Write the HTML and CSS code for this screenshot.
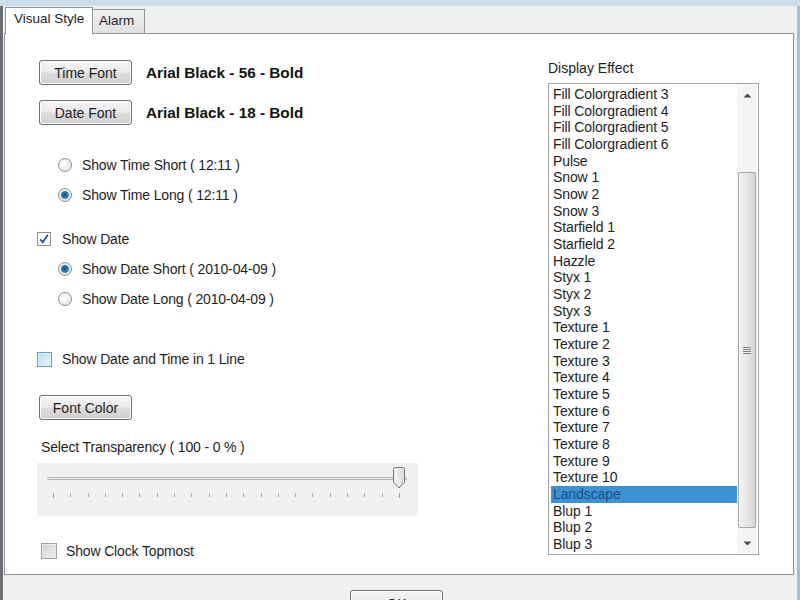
FILE: index.html
```html
<!DOCTYPE html>
<html>
<head>
<meta charset="utf-8">
<link rel="stylesheet" href="styles.css">
</head>
<body>
<div class="window">
  <div class="chrome"></div>
  <div class="tabs">
    <div class="tab active">Visual Style</div>
    <div class="tab">Alarm</div>
  </div>
  <div class="panel">
    <div class="left">
      <div class="fontrow r1">
        <button class="btn">Time Font</button>
        <span class="fontlabel">Arial Black - 56 - Bold</span>
      </div>
      <div class="fontrow r2">
        <button class="btn">Date Font</button>
        <span class="fontlabel">Arial Black - 18 - Bold</span>
      </div>
      <div class="opt radio-row g30"><span class="radio"></span>Show Time Short ( 12:11 )</div>
      <div class="opt radio-row g10"><span class="radio on"></span>Show Time Long ( 12:11 )</div>
      <div class="opt check-row g24"><span class="check on"><svg width="12" height="12" viewBox="0 0 12 12"><path d="M2.2 6.3 L4.8 9.2 L9.8 1.8" fill="none" stroke="#2c4f9e" stroke-width="1.8"/></svg></span>Show Date</div>
      <div class="opt radio-row g10"><span class="radio on"></span>Show Date Short ( 2010-04-09 )</div>
      <div class="opt radio-row g10"><span class="radio"></span>Show Date Long ( 2010-04-09 )</div>
      <div class="opt check-row g40"><span class="check hover"></span>Show Date and Time in 1 Line</div>
      <button class="btn fc">Font Color</button>
      <div class="translabel">Select Transparency ( 100 - 0 % )</div>
      <div class="trackbar">
        <div class="track"></div>
        <div class="thumb"><svg width="14" height="22" viewBox="0 0 14 22"><defs><linearGradient id="tg" x1="0" x2="1"><stop offset="0" stop-color="#f7f7f7"/><stop offset="1" stop-color="#d9d9d9"/></linearGradient></defs><path d="M1.5 2.5 Q1.5 0.5 3.5 0.5 L10.5 0.5 Q12.5 0.5 12.5 2.5 L12.5 15 L7 21 L1.5 15 Z" fill="url(#tg)" stroke="#777" stroke-width="1"/></svg></div>
        <div class="ticks">
          <i></i><i></i><i></i><i></i><i></i><i></i><i></i><i></i><i></i><i></i><i></i><i></i><i></i><i></i><i></i><i></i><i></i><i></i><i></i><i></i><i></i>
        </div>
      </div>
      <div class="opt check-row topmost"><span class="check gray"></span>Show Clock Topmost</div>
    </div>
    <div class="right">
      <div class="delabel">Display Effect</div>
      <div class="listbox">
        <ul class="items">
          <li>Fill Colorgradient 3</li>
          <li>Fill Colorgradient 4</li>
          <li>Fill Colorgradient 5</li>
          <li>Fill Colorgradient 6</li>
          <li>Pulse</li>
          <li>Snow 1</li>
          <li>Snow 2</li>
          <li>Snow 3</li>
          <li>Starfield 1</li>
          <li>Starfield 2</li>
          <li>Hazzle</li>
          <li>Styx 1</li>
          <li>Styx 2</li>
          <li>Styx 3</li>
          <li>Texture 1</li>
          <li>Texture 2</li>
          <li>Texture 3</li>
          <li>Texture 4</li>
          <li>Texture 5</li>
          <li>Texture 6</li>
          <li>Texture 7</li>
          <li>Texture 8</li>
          <li>Texture 9</li>
          <li>Texture 10</li>
          <li class="sel">Landscape</li>
          <li>Blup 1</li>
          <li>Blup 2</li>
          <li>Blup 3</li>
        </ul>
        <div class="scrollbar">
          <div class="arrow up"><svg width="9" height="5" viewBox="0 0 9 5"><path d="M0.5 4.5 L4.5 0.5 L8.5 4.5 Z" fill="#4a4a4a"/></svg></div>
          <div class="strack">
            <div class="sthumb"><span class="grip"></span></div>
          </div>
          <div class="arrow down"><svg width="9" height="5" viewBox="0 0 9 5"><path d="M0.5 0.5 L4.5 4.5 L8.5 0.5 Z" fill="#4a4a4a"/></svg></div>
        </div>
      </div>
    </div>
  </div>
  <div class="footer">
    <button class="btn ok">OK</button>
  </div>
</div>
</body>
</html>
```

FILE: styles.css
```css
* { box-sizing: border-box; }
html, body {
  margin: 0;
  padding: 0;
  width: 800px;
  height: 600px;
  overflow: hidden;
  background: #f0f0f0;
  font-family: "Liberation Sans", Arial, sans-serif;
  font-size: 14px;
  color: #1e1e1e;
}
.window {
  width: 800px;
  height: 600px;
  border-left: 3px solid #6b6f75;
  border-right: 3px solid #a9bdd3;
  background: #f0f0f0;
  display: flex;
  flex-direction: column;
}
.chrome {
  flex: none;
  height: 6px;
  background: #cddcec;
  margin-left: -3px;
  margin-right: -3px;
}
.tabs {
  flex: none;
  height: 27px;
  display: flex;
  align-items: flex-end;
  padding-left: 2px;
}
.tab {
  height: 24px;
  padding: 0 0 0 6px;
  border: 1px solid #8f959c;
  border-bottom: none;
  background: linear-gradient(#f2f2f2, #e0e0e0);
  line-height: 22px;
  font-size: 13.5px;
  white-space: nowrap;
  margin-left: -1px;
  position: relative;
}
.tab.active {
  height: 27px;
  background: #fff;
  width: 88px;
  padding-left: 8px;
  margin-left: 0;
  z-index: 2;
  top: 1px;
  line-height: 22px;
}
.tab:nth-child(2) { width: 53px; }
.panel {
  flex: none;
  height: 542px;
  margin-left: 1px;
  margin-right: 3px;
  background: #fff;
  border: 1px solid #8f959c;
  display: flex;
}
.left {
  width: 504px;
  padding-left: 32px;
  display: flex;
  flex-direction: column;
  align-items: flex-start;
  letter-spacing: -0.15px;
}
.btn {
  font-family: "Liberation Sans", Arial, sans-serif;
  font-size: 14px;
  color: #1e1e1e;
  width: 93px;
  height: 25px;
  border: 1px solid #707070;
  border-radius: 3px;
  background: linear-gradient(#f4f4f4 0%, #ebebeb 48%, #dddddd 52%, #cfcfcf 100%);
  padding: 0;
  box-shadow: inset 0 0 0 1px #fcfcfc;
  flex: none;
}
.fontrow {
  display: flex;
  align-items: center;
  padding-left: 2px;
}
.r1 { margin-top: 26px; }
.r2 { margin-top: 15px; }
.fontlabel {
  font-weight: bold;
  font-size: 15.3px;
  margin-left: 14px;
  color: #111;
  letter-spacing: 0;
}
.opt {
  display: flex;
  align-items: center;
  height: 20px;
}
.radio-row { padding-left: 21px; }
.g30 { margin-top: 30px; }
.g10 { margin-top: 10px; }
.g24 { margin-top: 24px; }
.g40 { margin-top: 40px; }
.radio {
  width: 14px;
  height: 14px;
  border-radius: 50%;
  border: 1px solid #8e8f8f;
  background: radial-gradient(circle at 40% 40%, #ffffff 0%, #f0f0f0 50%, #d8d8d8 100%);
  margin-right: 10px;
  position: relative;
  flex: none;
}
.radio.on::after {
  content: "";
  position: absolute;
  left: 2px;
  top: 2px;
  width: 8px;
  height: 8px;
  border-radius: 50%;
  background: radial-gradient(circle at 45% 45%, #1d4f6f 0%, #2a7aa8 45%, #6fb6df 100%);
}
.check {
  width: 14px;
  height: 14px;
  border: 1px solid #8e8f8f;
  background: linear-gradient(135deg, #dcdcdc, #fbfbfb);
  margin-right: 11px;
  flex: none;
  display: flex;
  align-items: center;
  justify-content: center;
}
.check.on { background: #fff; }
.check.hover {
  width: 15px;
  height: 15px;
  margin-right: 10px;
  border-color: #5aa0d0;
  background: linear-gradient(135deg, #b9dcf2, #e9f5fc);
  box-shadow: inset 0 0 0 1px #def0fb;
}
.check.gray {
  width: 16px;
  height: 16px;
  border-color: #a0a0a0;
  background: linear-gradient(135deg, #cfcfcf, #f3f3f3);
  box-shadow: inset 0 0 0 1px #e8e8e8;
}
.fc { margin-top: 26px; margin-left: 2px; }
.translabel {
  margin-top: 18px;
  margin-left: 4px;
  height: 18px;
  line-height: 18px;
}
.trackbar {
  margin-top: 7px;
  width: 381px;
  height: 53px;
  background: #f0f0f0;
  position: relative;
}
.track {
  position: absolute;
  left: 10px;
  top: 14px;
  width: 360px;
  height: 3px;
  border: 1px solid #b4b4b4;
  border-radius: 2px;
  background: #e6e6e6;
}
.thumb {
  position: absolute;
  left: 355px;
  top: 4px;
  width: 14px;
  height: 22px;
}
.ticks {
  position: absolute;
  left: 16px;
  top: 30px;
  width: 347px;
  display: flex;
  justify-content: space-between;
}
.ticks i {
  display: block;
  width: 1px;
  height: 4px;
  background: #b0b0b0;
}
.ticks i:first-child, .ticks i:last-child { height: 5px; background: #999; }
.topmost { margin-top: 25px; padding-left: 4px; height: 20px; }
.topmost .check { margin-right: 9px; }

.right {
  flex: 1;
  padding-left: 39px;
  display: flex;
  flex-direction: column;
}
.delabel {
  margin-top: 26px;
  height: 16px;
  line-height: 16px;
}
.listbox {
  margin-top: 7px;
  width: 211px;
  height: 472px;
  border: 1px solid #a5a5a5;
  display: flex;
  padding: 2px 1px 1px 2px;
}
.items {
  list-style: none;
  margin: 0;
  padding: 0;
  flex: 1;
  letter-spacing: -0.1px;
}
.items li {
  height: 16.68px;
  line-height: 16.68px;
  padding-left: 2px;
  white-space: nowrap;
}
.items li.sel {
  background: #3b92d5;
  color: #1b4f86;
}
.scrollbar {
  width: 20px;
  display: flex;
  flex-direction: column;
  background: #f4f4f4;
  margin-top: -1px;
}
.arrow {
  height: 20px;
  display: flex;
  align-items: center;
  justify-content: center;
}
.strack {
  flex: 1;
  position: relative;
  padding: 0 1px;
}
.sthumb {
  position: absolute;
  left: 1px;
  right: 1px;
  top: 67px;
  height: 356px;
  border: 1px solid #a8a8a8;
  border-radius: 2px;
  background: linear-gradient(90deg, #f4f4f4, #e4e4e4 60%, #d4d4d4);
  display: flex;
  align-items: center;
  justify-content: center;
}
.grip {
  width: 8px;
  height: 7px;
  background: repeating-linear-gradient(#7a7a7a 0 1px, #f4f4f4 1px 2px);
}
.footer {
  flex: 1;
  display: flex;
  justify-content: center;
  padding-top: 15px;
}
.ok {
  margin-left: -7px;
  height: 25px;
  line-height: 26px;
}
```
